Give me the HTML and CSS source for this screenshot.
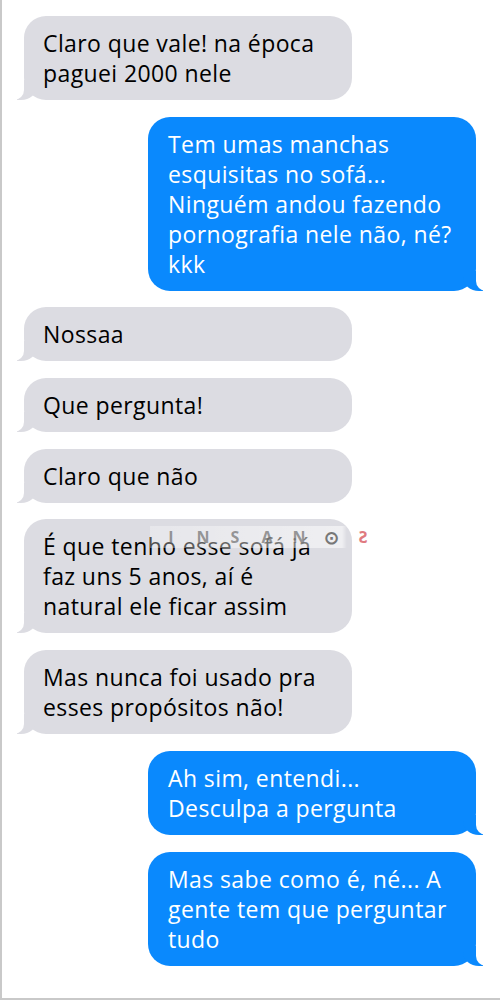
FILE: index.html
```html
<!DOCTYPE html>
<html lang="pt-BR">
<head>
  <meta charset="UTF-8" />
  <meta name="viewport" content="width=device-width, initial-scale=1.0" />
  <title>Conversa</title>
  <link rel="stylesheet" href="styles.css">
</head>
<body>
  <div class="chat">
    <div class="bubble in">Claro que vale! na época<br>paguei 2000 nele</div>
    <div class="bubble out">Tem umas manchas<br>esquisitas no sofá...<br>Ninguém andou fazendo<br>pornografia nele não, né?<br>kkk</div>
    <div class="bubble in">Nossaa</div>
    <div class="bubble in">Que pergunta!</div>
    <div class="bubble in">Claro que não</div>
    <div class="bubble in">
      É que tenho esse sofá já<br>faz uns 5 anos, aí é<br>natural ele ficar assim
      <div class="watermark">
        <span>I</span><span>N</span><span>S</span><span>A</span><span>N</span><span class="wm-o">⊙</span><span class="wm-s">S</span>
      </div>
    </div>
    <div class="bubble in">Mas nunca foi usado pra<br>esses propósitos não!</div>
    <div class="bubble out">Ah sim, entendi...<br>Desculpa a pergunta</div>
    <div class="bubble out">Mas sabe como é, né... A<br>gente tem que perguntar<br>tudo</div>
  </div>
</body>
</html>
```

FILE: styles.css
```css
body {
  margin: 0;
  padding: 0;
  background: #fff;
  font-family: "Open Sans", Arial, sans-serif;
}
.chat {
  height: 1000px;
  border-left: 2px solid #c9c9c9;
  border-bottom: 2px solid #c9c9c9;
  box-sizing: border-box;
  padding: 16px 24px 0 22px;
  display: flex;
  flex-direction: column;
  gap: 16.7px;
}
.bubble {
  position: relative;
  width: 328px;
  box-sizing: border-box;
  padding: 12px 10px 12px 19px;
  border-radius: 22px;
  font-size: 23px;
  line-height: 30px;
  letter-spacing: 0.4px;
}
.bubble.in {
  align-self: flex-start;
  background: #dcdce2;
  color: #000;
}
.bubble.out {
  align-self: flex-end;
  background: #0a89fd;
  color: #fff;
  padding-left: 20px;
}

/* iMessage style tails */
.bubble::before,
.bubble::after {
  content: "";
  position: absolute;
  bottom: 0;
  height: 20px;
}
.bubble.in::before {
  left: -7px;
  width: 20px;
  background: #dcdce2;
  border-bottom-right-radius: 16px 14px;
}
.bubble.in::after {
  left: -10px;
  width: 10px;
  background: #fff;
  border-bottom-right-radius: 10px;
}
.bubble.out::before {
  right: -7px;
  width: 20px;
  background: #0a89fd;
  border-bottom-left-radius: 16px 14px;
}
.bubble.out::after {
  right: -10px;
  width: 10px;
  background: #fff;
  border-bottom-left-radius: 10px;
}

/* site watermark over the photo */
.watermark {
  position: absolute;
  top: 7px;
  left: 126px;
  width: 240px;
  height: 22px;
  display: flex;
  align-items: center;
  background: linear-gradient(to right, rgba(255,255,255,0.3), rgba(255,255,255,0.55) 80%, rgba(255,255,255,0) 82%);
  border-top-right-radius: 18px;
  font-size: 16px;
  font-weight: bold;
  letter-spacing: 0;
  color: rgba(110,110,110,0.7);
  line-height: 22px;
}
.watermark span {
  width: 32px;
  text-align: center;
}
.watermark span:first-child {
  margin-left: 5px;
}
.watermark .wm-o {
  font-size: 18px;
  color: #777;
}
.watermark .wm-s {
  color: #e07a80;
  transform: scaleX(-1);
}
```
